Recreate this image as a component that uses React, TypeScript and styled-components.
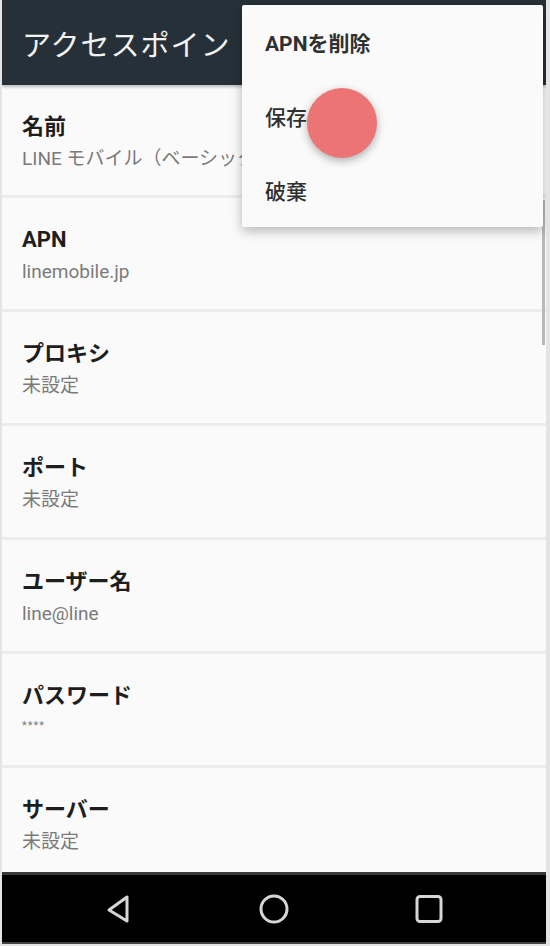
import React from "react";
import styled, { createGlobalStyle } from "styled-components";

const GlobalStyle = createGlobalStyle`
  html, body {
    margin: 0;
    padding: 0;
    background: #e4e4e4;
  }
  body {
    font-family: Roboto, "Noto Sans CJK JP", sans-serif;
  }
`;

const fields = [
  { title: "名前", value: "LINE モバイル（ベーシック）" },
  { title: "APN", value: "linemobile.jp" },
  { title: "プロキシ", value: "未設定" },
  { title: "ポート", value: "未設定" },
  { title: "ユーザー名", value: "line@line" },
  { title: "パスワード", value: "****", masked: true },
  { title: "サーバー", value: "未設定" },
];

const menuItems = ["APNを削除", "保存", "破棄"];

export default function App() {
  return (
    <>
      <GlobalStyle />
      <Screen>
        <AppBar>
          <BarTitle>アクセスポイン</BarTitle>
        </AppBar>
        <List>
          {fields.map((f) => (
            <Row key={f.title}>
              <Title>{f.title}</Title>
              <Value $masked={f.masked}>{f.value}</Value>
            </Row>
          ))}
        </List>
        <NavBar>
          <NavIcon viewBox="0 0 40 40">
            <path
              d="M28 8 L28 32 L10 21 Z"
              fill="none"
              stroke="#d6d6d6"
              strokeWidth="3"
              strokeLinejoin="round"
            />
          </NavIcon>
          <NavIcon viewBox="0 0 40 40">
            <circle cx="20" cy="20" r="13" fill="none" stroke="#d6d6d6" strokeWidth="3" />
          </NavIcon>
          <NavIcon viewBox="0 0 40 40">
            <rect
              x="8"
              y="7.5"
              width="24"
              height="25"
              rx="3"
              fill="none"
              stroke="#d6d6d6"
              strokeWidth="3"
            />
          </NavIcon>
        </NavBar>
        <Scrollbar />
        <Menu>
          {menuItems.map((m, i) => (
            <MenuItem key={m} $strong={i === 0}>
              {m}
            </MenuItem>
          ))}
        </Menu>
        <Touch />
      </Screen>
    </>
  );
}

const Screen = styled.div`
  position: relative;
  width: 544px;
  height: 944px;
  margin-left: 2px;
  background: #fafafa;
  display: flex;
  flex-direction: column;
  overflow: hidden;
`;

const AppBar = styled.header`
  height: 85px;
  flex-shrink: 0;
  background: #253038;
  box-shadow: 0 2px 3px rgba(0, 0, 0, 0.25);
  display: flex;
  align-items: center;
  padding-left: 20px;
  position: relative;
  z-index: 1;
`;

const BarTitle = styled.h1`
  margin: 0;
  font-family: "Noto Sans CJK JP", sans-serif;
  font-weight: 400;
  font-size: 29px;
  color: #f2f2f2;
  white-space: nowrap;
  letter-spacing: 1px;
`;

const List = styled.div`
  flex: 1;
  display: flex;
  flex-direction: column;
  overflow: hidden;
`;

const Row = styled.div`
  height: 114px;
  flex-shrink: 0;
  box-sizing: border-box;
  padding: 27px 20px 0;
  border-bottom: 3px solid #ececec;
  &:first-child {
    height: 113px;
    padding-top: 27px;
  }
`;

const Title = styled.div`
  font-family: Roboto, "Noto Sans CJK JP", sans-serif;
  font-weight: 700;
  font-size: 22px;
  line-height: 30px;
  color: #1e1e1e;
`;

const Value = styled.div<{ $masked?: boolean }>`
  font-family: Roboto, "Noto Sans CJK JP", sans-serif;
  font-size: ${(p) => (p.$masked ? "11px" : "19px")};
  line-height: ${(p) => (p.$masked ? "30px" : "34px")};
  color: #7a7a7a;
  white-space: nowrap;
  letter-spacing: ${(p) => (p.$masked ? "1px" : "0")};
`;

const NavBar = styled.nav`
  height: 72px;
  flex-shrink: 0;
  box-sizing: border-box;
  background: #000;
  border-top: 3px solid #383838;
  border-bottom: 2px solid #444;
  display: flex;
  align-items: center;
  justify-content: center;
  gap: 115px;
`;

const NavIcon = styled.svg`
  width: 40px;
  height: 40px;
`;

const Scrollbar = styled.div`
  position: absolute;
  right: 1px;
  top: 200px;
  width: 3px;
  height: 145px;
  background: #b9b9b9;
`;

const Menu = styled.div`
  position: absolute;
  top: 5px;
  left: 240px;
  width: 301px;
  height: 222px;
  background: #fafafa;
  border-radius: 2px;
  box-shadow: 0 4px 12px rgba(0, 0, 0, 0.28);
  display: flex;
  flex-direction: column;
  z-index: 2;
`;

const MenuItem = styled.div<{ $strong?: boolean }>`
  height: 74px;
  display: flex;
  align-items: center;
  padding-left: 23px;
  font-family: Roboto, "Noto Sans CJK JP", sans-serif;
  font-size: 21px;
  font-weight: ${(p) => (p.$strong ? 700 : 500)};
  color: #303030;
`;

const Touch = styled.div`
  position: absolute;
  left: 305px;
  top: 88px;
  width: 70px;
  height: 70px;
  border-radius: 50%;
  background: #ec7474;
  box-shadow: 0 3px 8px rgba(0, 0, 0, 0.3);
  z-index: 3;
`;
